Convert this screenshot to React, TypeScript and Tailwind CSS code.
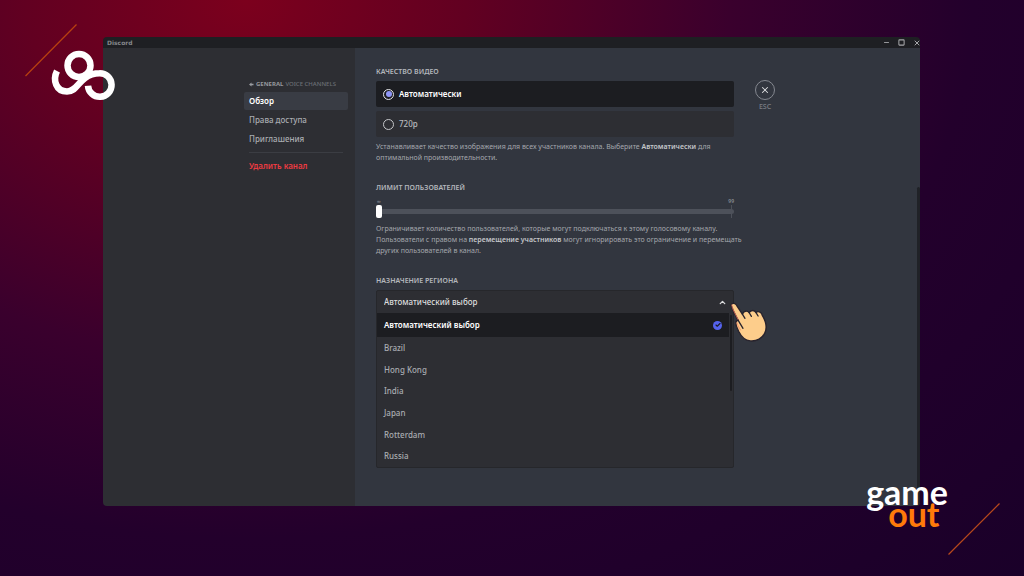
import { useState } from "react";
import type { ReactNode } from "react";
import { Check, ChevronUp, Minus, Square, X } from "lucide-react";

const regions = ["Brazil", "Hong Kong", "India", "Japan", "Rotterdam", "Russia"];
const AUTO = "Автоматический выбор";

function Heading({ children }: { children: ReactNode }) {
  return <h2 className="text-[7px] leading-[10px] font-semibold uppercase text-[#b4b7bc]">{children}</h2>;
}

function TitleBar() {
  return (
    <header className="flex h-[11px] items-center justify-between bg-[#1e1f23] pl-1 text-[#a6a7aa]">
      <span className="font-['DejaVu_Sans',sans-serif] text-[6px] leading-[10px] font-bold text-[#84868a]">Discord</span>
      <div className="flex gap-2">
        <button aria-label="Свернуть" className="flex w-[7px] justify-center"><Minus size={7} strokeWidth={3} /></button>
        <button aria-label="Развернуть" className="flex w-[7px] justify-center"><Square size={7} strokeWidth={3.5} /></button>
        <button aria-label="Закрыть окно" className="flex w-[7px] justify-center"><X size={8} strokeWidth={3} className="shrink-0" /></button>
      </div>
    </header>
  );
}

function Sidebar() {
  return (
    <aside className="flex w-[252px] shrink-0 justify-end bg-[#2d2e33] pt-[31px] pr-[7px]">
      <nav className="flex w-[104px] flex-col items-stretch gap-px text-[8px] leading-[18px] text-[#a9acb1]">
        <p className="flex items-center gap-[2px] pl-[5px] text-[6px] leading-[10px] text-[#6b6e75]">
          <svg viewBox="0 0 10 10" className="size-[5px] fill-[#9a9ca1]" aria-hidden="true">
            <path d="M0 5 5 1v2.500h4v3H5V9Z" />
          </svg>
          <span className="font-bold text-[#96989d]">GENERAL</span>
          <span className="font-medium whitespace-nowrap">VOICE CHANNELS</span>
        </p>
        <a href="#overview" className="mt-[2px] block rounded-xs bg-[#393c44] pl-[5px] font-semibold text-white">Обзор</a>
        <a href="#permissions" className="block pl-[5px] font-medium">Права доступа</a>
        <a href="#invites" className="block pl-[5px] font-medium">Приглашения</a>
        <hr className="mx-[5px] my-[3px] border-[#3b3d43]" />
        <button className="pl-[5px] text-left font-semibold text-[#ed3b42]">Удалить канал</button>
      </nav>
    </aside>
  );
}

function QualityOption({ label, checked, onSelect }: { label: string; checked: boolean; onSelect: () => void }) {
  return (
    <label className={`flex h-[26px] items-center gap-[5px] rounded-xs pl-[7px] text-[8px] ${checked ? "bg-[#1c1d21] font-semibold text-white" : "bg-[#2d2e33] font-medium text-[#b9bbbe]"}`}>
      <input
        type="radio"
        name="quality"
        checked={checked}
        onChange={onSelect}
        className="grid size-[11px] appearance-none place-items-center rounded-full border border-[#c5c7ca] checked:border-[#e4e5e8] checked:before:size-[6px] checked:before:rounded-full checked:before:bg-[#8f96f6]"
      />
      {label}
    </label>
  );
}

function RegionPicker() {
  const [region, setRegion] = useState(AUTO);
  return (
    <section className="mt-[20px]">
      <Heading><label htmlFor="region">Назначение региона</label></Heading>
      <div className="mt-1 rounded-xs border border-[#26272b] bg-[#2d2e33] text-[8px]">
        <div className="grid h-[22px] items-center">
          <select
            id="region"
            value={region}
            onChange={(e) => setRegion(e.target.value)}
            className="col-start-1 row-start-1 h-full w-full appearance-none pl-[7px] font-medium text-[#dcddde] outline-none"
          >
            {[AUTO, ...regions].map((r) => <option key={r}>{r}</option>)}
          </select>
          <ChevronUp size={9} strokeWidth={3.5} className="pointer-events-none col-start-1 row-start-1 mr-[6px] justify-self-end text-[#dcddde]" />
        </div>
        <div className="flex h-[154px]">
          <ul role="listbox" aria-label="Регионы" className="flex flex-1 flex-col">
            <li role="option" aria-selected="true" className="flex h-6 items-center justify-between bg-[#1c1d21] pr-[7px] pl-[7px] font-semibold text-white">
              {AUTO}
              <span className="grid size-[9px] place-items-center rounded-full bg-[#5563ed] text-[#1c1d21]">
                <Check size={6} strokeWidth={4.5} />
              </span>
            </li>
            {regions.map((r) => (
              <li key={r} role="option" aria-selected="false" className="flex flex-1 items-center pl-[7px] font-medium text-[#a9acb1]">{r}</li>
            ))}
          </ul>
          <div className="w-1 px-px pt-[2px]"><div className="h-[76px] rounded-full bg-[#1c1d21]" /></div>
        </div>
      </div>
    </section>
  );
}

function Settings() {
  const [quality, setQuality] = useState("Автоматически");
  const [limit, setLimit] = useState(0);
  return (
    <main className="flex flex-1 items-start bg-[#32363f] pl-[21px]">
      <div className="w-[358px] pt-[19px] pb-[38px]">
        <section>
          <Heading>Качество видео</Heading>
          <div className="mt-1 flex flex-col gap-1">
            {["Автоматически", "720p"].map((q) => (
              <QualityOption key={q} label={q} checked={quality === q} onSelect={() => setQuality(q)} />
            ))}
          </div>
          <p className="mt-1 text-[7px] leading-[11px] whitespace-nowrap text-[#a4a7ad]">
            Устанавливает качество изображения для всех участников канала. Выберите{" "}
            <strong className="font-semibold text-[#c4c6ca]">Автоматически</strong> для
            <br />
            оптимальной производительности.
          </p>
        </section>
        <section className="mt-[20px]">
          <Heading><label htmlFor="limit">Лимит пользователей</label></Heading>
          <div className="mt-1 flex justify-between text-[5px] leading-[8px] font-semibold text-[#8b8e95]">
            <span className="pl-px">∞</span>
            <span>99</span>
          </div>
          <div className="grid h-[13px] items-center">
            <div className="col-start-1 row-start-1 mr-[2px] h-full w-px justify-self-end bg-[#4d515a]" />
            <input
              id="limit"
              type="range"
              min={0}
              max={99}
              value={limit}
              onChange={(e) => setLimit(Number(e.target.value))}
              className="col-start-1 row-start-1 h-[5px] w-full appearance-none rounded-full bg-[#4d515a] [&::-webkit-slider-thumb]:h-[13px] [&::-webkit-slider-thumb]:w-[6px] [&::-webkit-slider-thumb]:appearance-none [&::-webkit-slider-thumb]:rounded-xs [&::-webkit-slider-thumb]:bg-white"
            />
          </div>
          <p className="mt-[5px] text-[7px] leading-[11px] whitespace-nowrap text-[#a4a7ad]">
            Ограничивает количество пользователей, которые могут подключаться к этому голосовому каналу.
            <br />
            Пользователи с правом на <strong className="font-semibold text-[#c4c6ca]">перемещение участников</strong> могут игнорировать это ограничение и перемещать
            <br />
            других пользователей в канал.
          </p>
        </section>
        <RegionPicker />
      </div>
      <button className="mt-8 ml-[21px] flex flex-col items-center gap-[2px] text-[7px] leading-[10px] font-medium text-[#7b7e86]">
        <span className="grid size-5 place-items-center rounded-full border border-[#858890] text-[#e0e1e3]">
          <X size={10} strokeWidth={2.5} />
        </span>
        ESC
      </button>
      <div className="ml-auto w-[3px] self-stretch pt-[139px]"><div className="h-full rounded-full bg-[#202227]" /></div>
    </main>
  );
}

function Hand() {
  return (
    <svg viewBox="728 300 42 44" className="pointer-events-none absolute top-[300px] left-[728px] h-[44px] w-[42px]" aria-hidden="true">
      <path
        d="M731 305c1.400-2.400 4.400-2 5.600.300l5.900 9c.800-3.200 4.500-4.200 6.600-1.800 1.900-2.700 5.400-2.600 6.800-.100 2.800-1.700 5.800-.200 6.400 2.900 3.400 5.600 4.800 12.600 2.700 17.300-2.400 5.600-8.500 8.900-14.600 8.300-6.500-.600-9.500-4.900-11.800-9.700-1.300-2.900-3.200-6-2.700-8.700.200-1.400 1.100-2.200 2.300-2.200-2.500-4.700-4.900-8.700-7.200-15.300Z"
        fill="#fdcd8b"
        stroke="#28232d"
        strokeWidth="1.400"
        strokeLinejoin="round"
      />
      <path d="M731.700 305c.200 3.500 4.300 10.200 6.300 14.500M737 323c.3 2.500 2.500 5 3.500 7" fill="none" stroke="#f2775f" strokeWidth=".7" strokeLinecap="round" />
      <path d="M742.500 314.300l2.500 4M749.100 312.500l2.300 3.900M755.900 312.400l2.200 3.600M738.200 320.300l4.800 8" fill="none" stroke="#28232d" strokeWidth="1.300" strokeLinecap="round" />
    </svg>
  );
}

export default function App() {
  return (
    <div className="relative flex min-h-screen flex-col overflow-hidden bg-[#1b0029] bg-[radial-gradient(ellipse_at_24%_0%,#7c001d_0%,#620021_20%,#3a002d_44%,#23002c_66%,#1a0029_100%)] pt-[37px] pr-[104px] pb-[71px] pl-[103px] font-['Noto_Sans',sans-serif]">
      <div className="flex flex-1 flex-col overflow-hidden rounded-sm">
        <TitleBar />
        <div className="flex flex-1">
          <Sidebar />
          <Settings />
        </div>
      </div>

      <svg viewBox="20 20 100 85" className="pointer-events-none absolute top-5 left-5 h-[85px] w-[100px]" fill="none" aria-hidden="true">
        <path d="M25.500 76 76.500 24.500" stroke="#b9400f" strokeWidth="1.200" />
        <g stroke="#fff" strokeWidth="6.500">
          <circle cx="79" cy="65.500" r="11.500" />
          <path d="M57 71C52.500 80 56 91.500 67 91.500c8.500 0 11-8.500 18-13.500 4.500-3.300 9-4.800 14.500-4.800a11.800 11.800 0 1 1-11.500 12.500" />
        </g>
      </svg>
      <Hand />
      <div className="absolute right-[76px] bottom-[52px] font-['Lato',sans-serif] text-[34px] leading-[22px] font-bold text-white">
        <p>game</p>
        <p className="pl-[22px] text-[#ff7a0a]">out</p>
      </div>
      <svg viewBox="0 0 54 54" className="pointer-events-none absolute right-[23px] bottom-[21px] size-[54px]" aria-hidden="true">
        <path d="M1.500 52.500 52.500 1.500" stroke="#b9481c" strokeWidth="1.200" />
      </svg>
    </div>
  );
}
